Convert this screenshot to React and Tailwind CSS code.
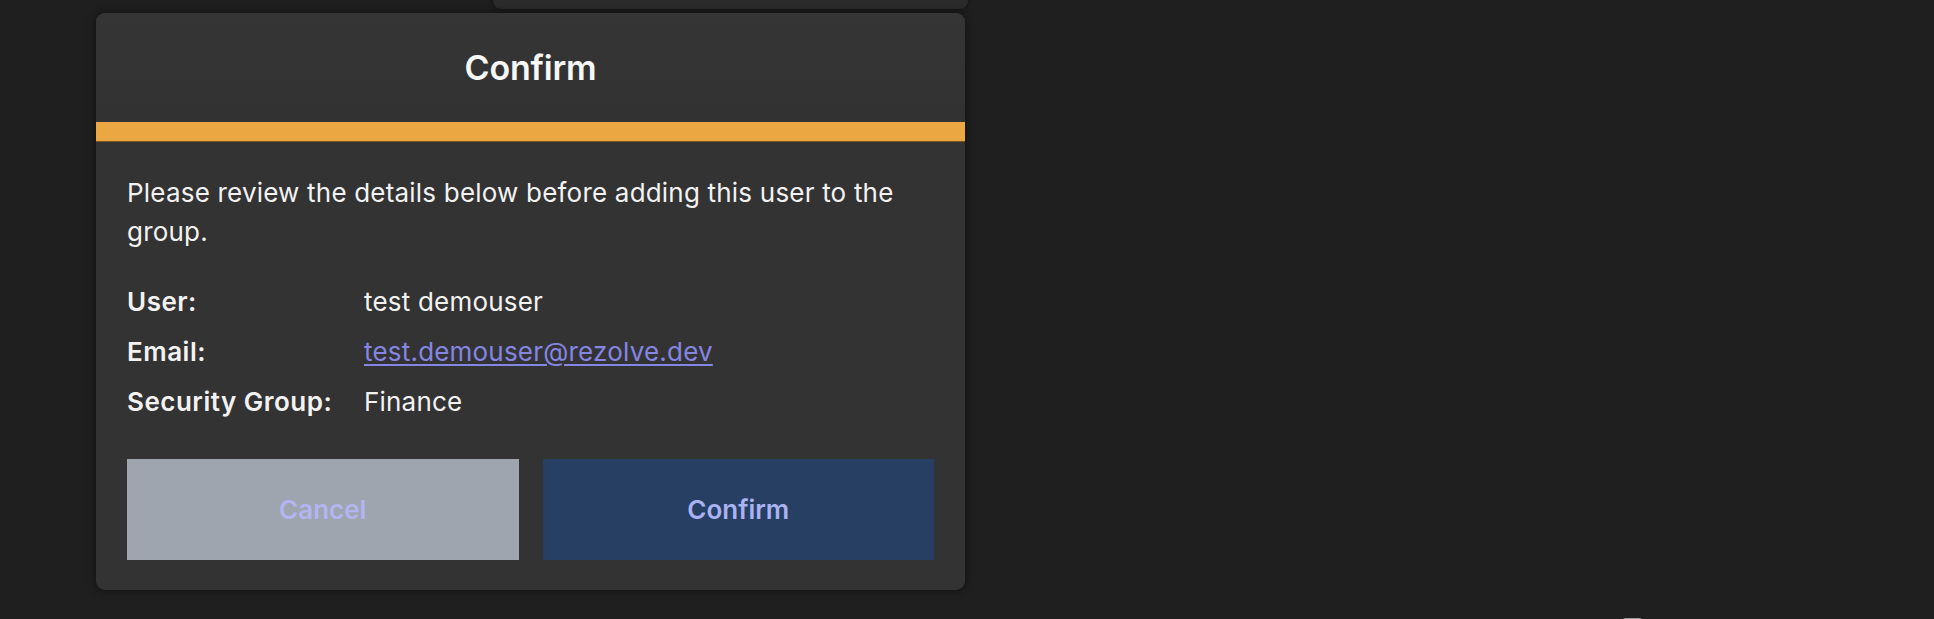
import React from "react";

export default function App() {
  return (
    <div
      className="relative w-[1934px] h-[619px] overflow-hidden bg-[#1f1f1f] pl-[96px] pt-[13px]"
      style={{ fontFamily: "Inter, 'Noto Sans', sans-serif" }}
    >
      {/* background panel peeking at top */}
      <div className="absolute left-[493px] top-[-40px] w-[475px] h-[49px] rounded-b-lg bg-[#2b2b2b] shadow-[0_0_4px_rgba(0,0,0,0.6)]" />
      {/* small element peeking at bottom */}
      <div className="absolute left-[1622px] top-[618px] w-[21px] h-[10px] rounded-sm bg-[#9a9a9a]" />

      <div className="relative w-[869px] rounded-[9px] bg-[#333333] overflow-hidden shadow-[0_0_8px_rgba(0,0,0,0.55)]">
        <div className="h-[109px] flex items-center justify-center bg-gradient-to-b from-[#353535] to-[#323232]">
          <h2 className="text-[34px] font-semibold text-[#f7f7f7] tracking-[-0.2px]">Confirm</h2>
        </div>
        <div className="h-[20px] bg-[#eba742] border-b border-[#7a5520]" />
        <div className="px-[31px] pt-[31px] pb-[30px]">
          <p className="text-[26px] leading-[39px] text-[#f2f2f2] tracking-[0.2px]">
            Please review the details below before adding this user to the group.
          </p>
          <div className="mt-[25px] text-[26px] text-[#f2f2f2] tracking-[0.2px]">
            <div className="flex h-[50px] items-center">
              <span className="w-[237px] font-semibold tracking-[0.5px]">User:</span>
              <span>test demouser</span>
            </div>
            <div className="flex h-[50px] items-center">
              <span className="w-[237px] font-semibold tracking-[0.5px]">Email:</span>
              <a href="#" className="text-[#8585e3] underline underline-offset-[3px] decoration-[2px]">
                test.demouser@rezolve.dev
              </a>
            </div>
            <div className="flex h-[50px] items-center">
              <span className="w-[237px] font-semibold tracking-[0.5px]">Security Group:</span>
              <span>Finance</span>
            </div>
          </div>
          <div className="mt-[33px] grid grid-cols-2 gap-[24px]">
            <button className="h-[101px] bg-[#9ea5ae] text-[#b3b5f2] text-[26px] font-semibold">
              Cancel
            </button>
            <button className="h-[101px] bg-[#273f63] text-[#a9b3f2] text-[26px] font-semibold">
              Confirm
            </button>
          </div>
        </div>
      </div>
    </div>
  );
}
